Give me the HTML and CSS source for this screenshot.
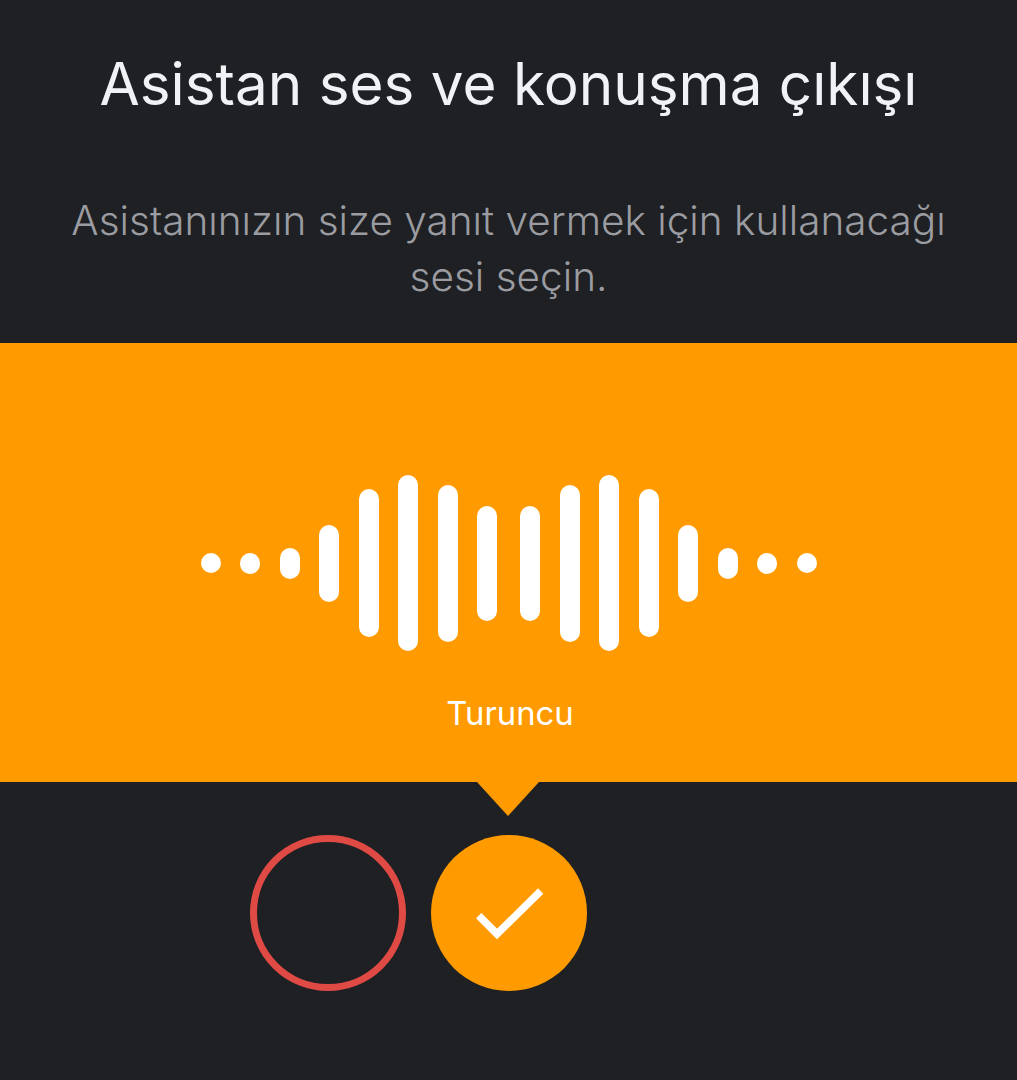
FILE: index.html

```html
<!DOCTYPE html>
<html lang="tr">
<head>
  <meta charset="UTF-8" />
  <meta name="viewport" content="width=device-width, initial-scale=1.0" />
  <title>Asistan ses ve konuşma çıkışı</title>
  <link rel="stylesheet" href="styles.css">
</head>
<body>
  <div class="screen">
    <h1 class="title">Asistan ses ve konuşma çıkışı</h1>
    <p class="subtitle">Asistanınızın size yanıt vermek için kullanacağı<br>sesi seçin.</p>

    <div class="banner">
      <div class="wave">
        <div class="wave-side">
          <span class="bar h20"></span>
          <span class="bar h21"></span>
          <span class="bar h31"></span>
          <span class="bar h77"></span>
          <span class="bar h148"></span>
          <span class="bar h176"></span>
          <span class="bar h157"></span>
          <span class="bar h115"></span>
        </div>
        <div class="wave-side">
          <span class="bar h115"></span>
          <span class="bar h157"></span>
          <span class="bar h176"></span>
          <span class="bar h148"></span>
          <span class="bar h77"></span>
          <span class="bar h31"></span>
          <span class="bar h21"></span>
          <span class="bar h20"></span>
        </div>
      </div>
      <div class="voice-name">Turuncu</div>
    </div>
    <div class="pointer"></div>

    <div class="voices">
      <div class="voice voice-red"></div>
      <div class="voice voice-orange">
        <svg width="156" height="156" viewBox="0 0 156 156" fill="none">
          <path d="M47.700 80.700 L66 99 L109.700 56" stroke="#fff" stroke-width="7.500" />
        </svg>
      </div>
    </div>
  </div>
</body>
</html>
```

FILE: styles.css

```css
body {
  margin: 0;
  background: #1f2023;
  font-family: "Inter", "Noto Sans", sans-serif;
}
.screen {
  height: 1080px;
  overflow: hidden;
}
.title {
  margin: 0;
  padding-top: 49px;
  height: 71px;
  line-height: 70px;
  font-size: 58.4px;
  font-weight: 400;
  text-align: center;
  color: #f1f2f5;
}
.subtitle {
  margin: 0;
  padding-top: 73px;
  height: 150px;
  line-height: 56px;
  font-size: 40.500px;
  font-weight: 300;
  text-align: center;
  color: #9a9ca1;
}
.banner {
  height: 439px;
  background: #ff9b00;
  overflow: hidden;
}
.wave {
  display: flex;
  justify-content: center;
  gap: 23px;
  height: 176px;
  margin-top: 132px;
}
.wave-side {
  display: flex;
  align-items: center;
  gap: 19.5px;
}
.bar {
  width: 20px;
  background: #fff;
  border-radius: 10px;
}
.h20 { height: 20px; }
.h21 { height: 21px; }
.h31 { height: 31px; }
.h77 { height: 77px; }
.h115 { height: 115px; }
.h148 { height: 148px; }
.h157 { height: 157px; }
.h176 { height: 176px; }
.voice-name {
  margin-top: 42px;
  padding-left: 3px;
  line-height: 40px;
  font-size: 32.8px;
  text-align: center;
  color: #fff;
}
.pointer {
  width: 0;
  height: 0;
  margin-left: 477px;
  border-left: 31.5px solid transparent;
  border-right: 31.5px solid transparent;
  border-top: 34px solid #ff9b00;
}
.voices {
  display: flex;
  gap: 25px;
  margin-top: 19px;
  padding-left: 250px;
}
.voice {
  width: 156px;
  height: 156px;
  box-sizing: border-box;
  border-radius: 50%;
}
.voice-red {
  border: 7px solid #e04a45;
}
.voice-orange {
  background: #ff9b00;
}
```
